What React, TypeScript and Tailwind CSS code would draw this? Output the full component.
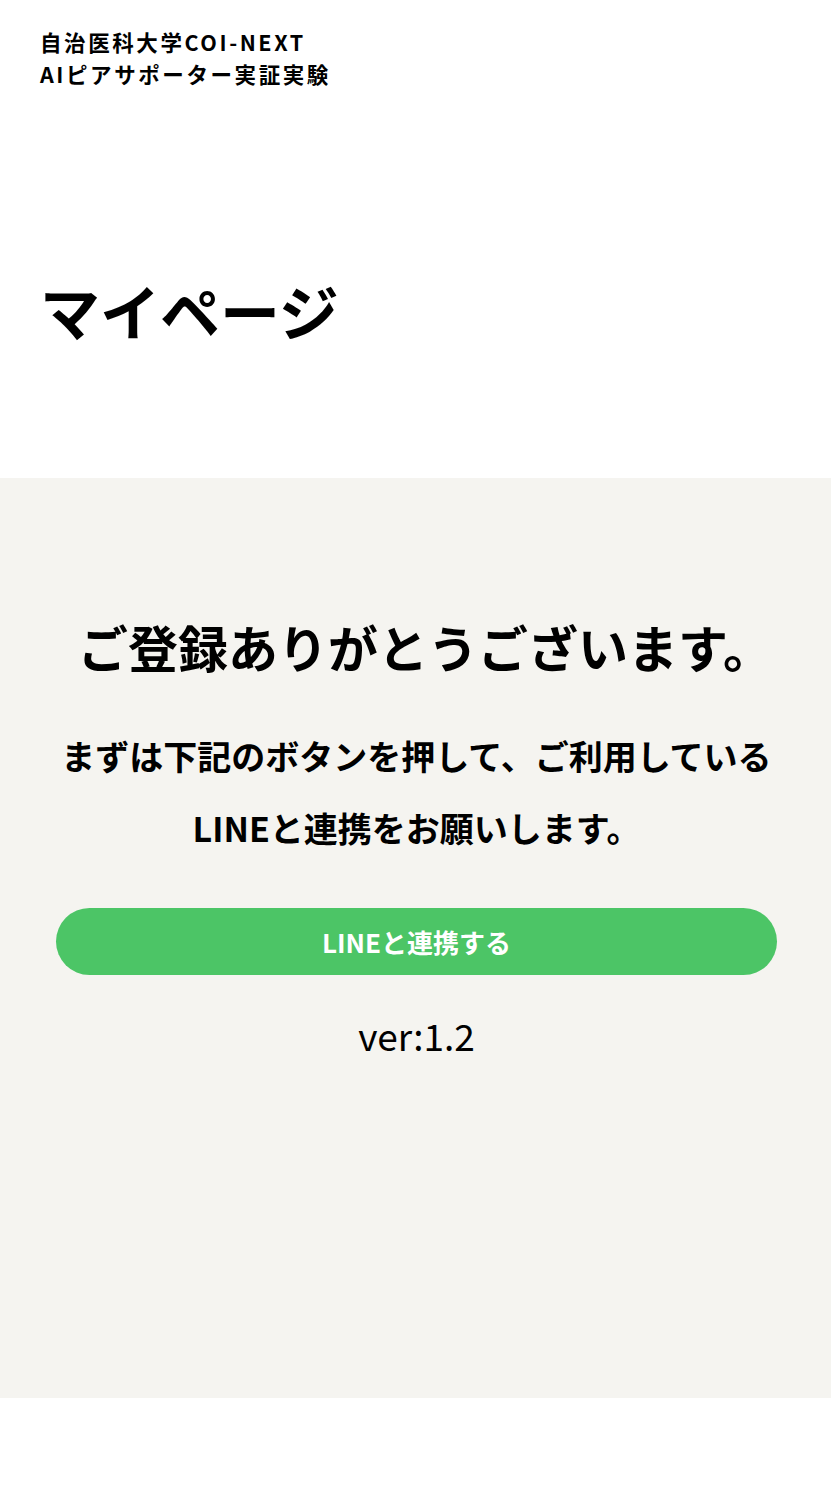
export default function App() {
  return (
    <div className="min-h-[1502px] bg-white text-black" style={{ fontFamily: '"Noto Sans CJK JP", "Noto Sans", sans-serif' }}>
      <header className="px-10 pt-[26px]">
        <p className="text-[21.5px] font-bold leading-[32px] tracking-[0.12em]">
          自治医科大学COI-NEXT
          <br />
          AIピアサポーター実証実験
        </p>
      </header>
      <div className="px-10 pt-[180px] pb-[128px]">
        <h1 className="text-[60px] font-bold leading-[80px]">マイページ</h1>
      </div>
      <main className="bg-[#f5f4f0] h-[920px] pl-14 pr-[54px] pt-[128px]">
        <h2 className="pl-[18px] text-center text-[50px] font-bold leading-[80px]">ご登録ありがとうございます。</h2>
        <p className="mt-[34px] text-center text-[34px] font-bold leading-[72px]">
          まずは下記のボタンを押して、ご利用している
          <br />
          LINEと連携をお願いします。
        </p>
        <button className="mt-[44px] w-full h-[67px] rounded-full bg-[#4cc566] text-white text-[26px] font-bold">
          LINEと連携する
        </button>
        <p className="mt-[36px] text-center text-[37px] leading-[48px]">ver:1.2</p>
      </main>
    </div>
  );
}
